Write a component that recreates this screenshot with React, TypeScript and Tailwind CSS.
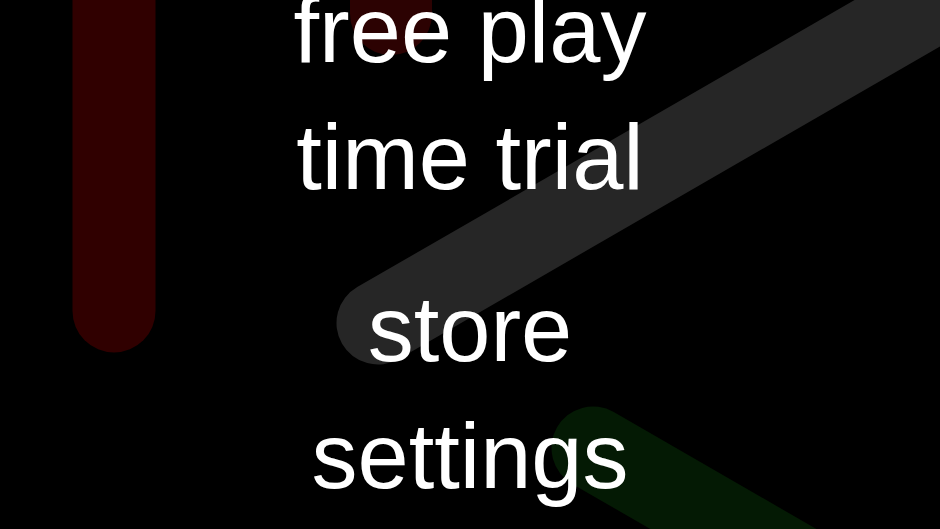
import React from "react";

const menu = [
  ["free play", "time trial"],
  ["store", "settings"],
];

function Streaks() {
  return (
    <svg
      className="absolute inset-0 h-full w-full"
      viewBox="0 0 940 529"
      preserveAspectRatio="none"
    >
      <g strokeLinecap="round" fill="none">
        <line x1="114" y1="-120" x2="114" y2="311" stroke="#300000" strokeWidth="83" />
        <line x1="391" y1="-120" x2="391" y2="14" stroke="#2c0202" strokeWidth="82" />
        <line x1="378" y1="323" x2="1071" y2="-77" stroke="#262626" strokeWidth="83" />
        <line x1="593" y1="448" x2="853" y2="598" stroke="#041a04" strokeWidth="83" />
      </g>
    </svg>
  );
}

export default function App() {
  return (
    <div className="relative h-[529px] w-full overflow-hidden bg-black">
      <Streaks />
      <div
        className="relative -mt-[33px] flex flex-col items-center gap-[45px] text-[92px] leading-[127px] text-white"
        style={{ fontFamily: '"Liberation Sans", Arial, sans-serif' }}
      >
        {menu.map((group, i) => (
          <div key={i} className="flex flex-col items-center">
            {group.map((label) => (
              <button key={label} className="h-[127px] whitespace-nowrap">
                {label}
              </button>
            ))}
          </div>
        ))}
      </div>
    </div>
  );
}
